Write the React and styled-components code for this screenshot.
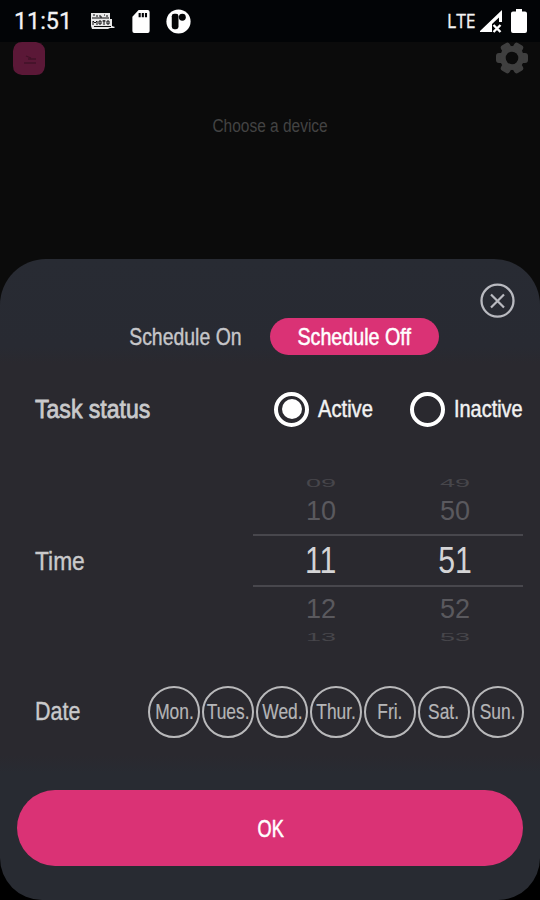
import React, { useState } from "react";
import styled, { createGlobalStyle } from "styled-components";

const GlobalStyle = createGlobalStyle`
  * {
    box-sizing: border-box;
  }
  body {
    margin: 0;
    background: #000;
    font-family: "Liberation Sans", Arial, sans-serif;
  }
  button {
    font-family: inherit;
    border: 0;
    padding: 0;
    background: none;
  }
`;

const Screen = styled.div`
  width: 540px;
  height: 900px;
  display: flex;
  flex-direction: column;
  overflow: hidden;
  background: linear-gradient(#0b0b0b 800px, #000 800px);
`;

const StatusBar = styled.div`
  height: 42px;
  display: flex;
  align-items: center;
  padding: 0 13px 0 14px;
  background: #020406;
  color: #f3f3f3;
`;

const Clock = styled.span`
  width: 76px;
  font-family: Roboto, sans-serif;
  font-size: 24px;
  line-height: 43px;
`;

const StatusIcons = styled.div`
  display: flex;
  align-items: center;
  gap: 16px;
  flex: 1;
`;

const Network = styled.span`
  width: 33px;
  font-family: "Open Sans", sans-serif;
  font-size: 19.5px;
  line-height: 42px;
`;

const AppBar = styled.div`
  height: 74px;
  display: flex;
  justify-content: space-between;
  padding: 0 12px 0 13px;
`;

const MenuButton = styled.button`
  width: 32px;
  height: 33px;
  display: flex;
`;

const Hint = styled.div`
  height: 20px;
  display: flex;
  justify-content: center;
  color: #434343;
  font-size: 18px;
  line-height: 20px;
`;

// squeezes the regular face to a condensed one
const Narrow = styled.span`
  display: block;
  flex: none;
  white-space: nowrap;
  transform: scaleX(${(props) => props.$scale || 0.82});
  transform-origin: ${(props) => props.$origin || "left"} center;
  -webkit-text-stroke: ${(props) => props.$stroke || 0}px currentColor;
`;

const Sheet = styled.div`
  height: 641px;
  margin-top: 123px;
  display: flex;
  flex-direction: column;
  border-radius: 46px 46px 42px 42px;
  background: linear-gradient(
    #282b33 0,
    #282a32 88px,
    #2a292f 104px,
    #2a292f 496px,
    #282b32 514px,
    #282b32 100%
  );
`;

const SheetHeader = styled.div`
  height: 59px;
  flex: none;
  display: flex;
  justify-content: flex-end;
  padding: 24px 25px 0 0;
`;

const CloseButton = styled.button`
  width: 35px;
  height: 35px;
  display: flex;
`;

const Tabs = styled.div`
  height: 38px;
  flex: none;
  display: flex;
  padding-left: 101px;
`;

const Tab = styled.button`
  width: 169px;
  height: 37px;
  display: flex;
  align-items: center;
  justify-content: center;
  border-radius: 19px;
  font-size: 24px;
  line-height: 26px;
  color: ${(props) => (props.$active ? "#fff" : "#c6c6c9")};
  background: ${(props) => (props.$active ? "#da3275" : "transparent")};
`;

const Row = styled.div`
  height: ${(props) => props.$height}px;
  flex: none;
  display: flex;
  align-items: center;
  padding-left: 35px;
`;

const RowLabel = styled.div`
  width: ${(props) => props.$width}px;
  flex: none;
  color: #c9c9cb;
  font-size: 26.5px;
`;

const Radio = styled.button`
  width: 136px;
  flex: none;
  display: flex;
  align-items: center;
  gap: 9px;
  color: #f2f2f2;
  font-size: 24px;
`;

const RadioMark = styled.span`
  width: 35px;
  height: 35px;
  flex: none;
  display: flex;
  align-items: center;
  justify-content: center;
  border: 4px solid #fff;
  border-radius: 50%;

  &::after {
    content: "";
    width: 20px;
    height: 20px;
    border-radius: 50%;
    background: ${(props) => (props.$checked ? "#fff" : "transparent")};
  }
`;

const Picker = styled.div`
  width: 270px;
  flex: none;
`;

const PickerRow = styled.div`
  height: ${(props) => props.$height}px;
  display: grid;
  grid-template-columns: 134px 134px;
  padding-left: 1px;
  align-items: center;
  justify-items: center;
  font-size: 27px;
  line-height: 30px;
  color: #5a595e;
`;

const CurrentRow = styled(PickerRow)`
  border-top: 2px solid #48474d;
  border-bottom: 2px solid #48474d;
  font-size: 36px;
  color: #d4d4d6;
`;

// the outermost rows are rolled over the edge of the wheel
const EdgeRow = styled(PickerRow)`
  line-height: ${(props) => props.$height}px;
  color: #47464b;

  span {
    transform: scaleY(0.42);
  }
`;

const Days = styled.div`
  display: flex;
  gap: 2px;
`;

const Day = styled.button`
  width: 52px;
  height: 52px;
  display: flex;
  align-items: center;
  justify-content: center;
  border: 2.5px solid #b9b9bb;
  border-radius: 50%;
  font-size: 22px;
  line-height: 24px;
  color: #b5b5b7;
`;

const OkButton = styled.button`
  height: 76px;
  flex: none;
  margin: 27px 17px 0;
  padding: 1px 0 0 2px;
  display: flex;
  align-items: center;
  justify-content: center;
  border-radius: 38px;
  background: #da3275;
  color: #fff;
  font-size: 24.5px;
`;

const MotoIcon = () => (
  <svg width="26" height="17" viewBox="0 0 26 17">
    <path d="M1 0h19v6h2v7l3 1-1 1h-4l-2 1H2l-1-3z" fill="#e8e8e8" />
    <path
      d="M3 2h2M7 2v2M10 2v2h2M14 2h1M17 2v2M2 5h17M3 12V8l2 2 2-2v4M9 8h2v3H9zM14 7v5M12.500 8h3M17 8h2v3h-2zM4 13.500h17"
      fill="none"
      stroke="#0a0b0c"
      strokeWidth="1"
    />
  </svg>
);

const SdCardIcon = () => (
  <svg width="18" height="23" viewBox="0 0 18 24">
    <path
      fillRule="evenodd"
      fill="#fff"
      d="M6.500 0H16a2 2 0 0 1 2 2v20a2 2 0 0 1-2 2H2a2 2 0 0 1-2-2V7zM6.500 3v4.500h2.200V3zM9.800 3v4.500h2.200V3zM13.100 3v4.500h2.200V3z"
    />
  </svg>
);

const PatreonIcon = () => (
  <svg width="25" height="25" viewBox="0 0 26 26">
    <circle cx="13" cy="13" r="12.600" fill="#fff" />
    <rect x="6" y="5" width="7" height="16" rx="2.500" fill="#050607" />
    <circle cx="17" cy="8.500" r="3.600" fill="#050607" />
  </svg>
);

const SignalIcon = () => (
  <svg width="23" height="23" viewBox="1 0 23 23">
    <path
      fillRule="evenodd"
      fill="#fff"
      d="M0 22L23 0v12h-3V7.500L13 14v8z"
    />
    <path d="M14.500 15l7 7M21.500 15l-7 7" stroke="#fff" strokeWidth="2.400" />
  </svg>
);

const BatteryIcon = () => (
  <svg width="24" height="24" viewBox="-8 0 24 24">
    <path
      fill="#fff"
      d="M5 0h6v2.500h3a2 2 0 0 1 2 2V22a2 2 0 0 1-2 2H2a2 2 0 0 1-2-2V4.500a2 2 0 0 1 2-2h3z"
    />
  </svg>
);

const MenuIcon = () => (
  <svg width="32" height="33" viewBox="0 0 32 33">
    <path d="M9 0h14q9 2 9 9v15q-1 9-9 9H9q-9-1-9-9V9q1-9 9-9z" fill="#5b1837" />
    <path d="M13 14l5 2M15 17h8M11 21h12" stroke="#421228" strokeWidth="1.300" />
  </svg>
);

const GearIcon = () => (
  <svg width="32" height="32" viewBox="0 0 32 32">
    <g fill="#3f3f3f">
      {[0, 60, 120].map((angle) => (
        <rect
          key={angle}
          x="0"
          y="11"
          width="32"
          height="10"
          rx="3"
          transform={`rotate(${angle} 16 16)`}
        />
      ))}
      <circle cx="16" cy="16" r="12" />
    </g>
    <circle cx="16" cy="16" r="6.300" fill="#0b0b0b" />
  </svg>
);

const CloseIcon = () => (
  <svg width="35" height="35" viewBox="0 0 35 35" fill="none" stroke="#b9bac0">
    <circle cx="17.500" cy="17.700" r="16" strokeWidth="2.300" />
    <path d="M11 11.500l13 13M24 11.500l-13 13" strokeWidth="2.200" />
  </svg>
);

const days = ["Mon.", "Tues.", "Wed.", "Thur.", "Fri.", "Sat.", "Sun."];

const App = () => {
  const [tab, setTab] = useState("off");
  const [active, setActive] = useState(true);

  return (
    <Screen>
      <GlobalStyle />
      <StatusBar>
        <Clock>
          <Narrow $scale={0.97} $stroke={0.3}>
            11:51
          </Narrow>
        </Clock>
        <StatusIcons>
          <MotoIcon />
          <SdCardIcon />
          <PatreonIcon />
        </StatusIcons>
        <Network>
          <Narrow $scale={0.9} $stroke={0.3}>
            LTE
          </Narrow>
        </Network>
        <SignalIcon />
        <BatteryIcon />
      </StatusBar>
      <AppBar>
        <MenuButton>
          <MenuIcon />
        </MenuButton>
        <MenuButton>
          <GearIcon />
        </MenuButton>
      </AppBar>
      <Hint>
        <Narrow $scale={0.86} $origin="center">
          Choose a device
        </Narrow>
      </Hint>
      <Sheet>
        <SheetHeader>
          <CloseButton>
            <CloseIcon />
          </CloseButton>
        </SheetHeader>
        <Tabs>
          <Tab $active={tab === "on"} onClick={() => setTab("on")}>
            <Narrow $scale={0.81} $origin="center" $stroke={0.4}>
              Schedule On
            </Narrow>
          </Tab>
          <Tab $active={tab === "off"} onClick={() => setTab("off")}>
            <Narrow $scale={0.82} $origin="center" $stroke={0.5}>
              Schedule Off
            </Narrow>
          </Tab>
        </Tabs>
        <Row $height={106}>
          <RowLabel $width={239}>
            <Narrow $scale={0.87} $stroke={0.8}>
              Task status
            </Narrow>
          </RowLabel>
          <Radio onClick={() => setActive(true)}>
            <RadioMark $checked={active} />
            <Narrow $scale={0.84} $stroke={0.5}>
              Active
            </Narrow>
          </Radio>
          <Radio onClick={() => setActive(false)}>
            <RadioMark $checked={!active} />
            <Narrow $scale={0.83} $stroke={0.5}>
              Inactive
            </Narrow>
          </Radio>
        </Row>
        <Row $height={198}>
          <RowLabel $width={218}>
            <Narrow $scale={0.86} $stroke={0.4}>
              Time
            </Narrow>
          </RowLabel>
          <Picker>
            <EdgeRow $height={10}>
              <span>09</span>
              <span>49</span>
            </EdgeRow>
            <PickerRow $height={46}>
              <span>10</span>
              <span>50</span>
            </PickerRow>
            <CurrentRow $height={53}>
              <Narrow $scale={0.84} $origin="center">
                11
              </Narrow>
              <Narrow $scale={0.84} $origin="center">
                51
              </Narrow>
            </CurrentRow>
            <PickerRow $height={44}>
              <span>12</span>
              <span>52</span>
            </PickerRow>
            <EdgeRow $height={13}>
              <span>13</span>
              <span>53</span>
            </EdgeRow>
          </Picker>
        </Row>
        <Row $height={103}>
          <RowLabel $width={113}>
            <Narrow $scale={0.81} $stroke={0.4}>
              Date
            </Narrow>
          </RowLabel>
          <Days>
            {days.map((day) => (
              <Day key={day}>
                <Narrow $scale={0.79} $origin="center" $stroke={0.2}>
                  {day}
                </Narrow>
              </Day>
            ))}
          </Days>
        </Row>
        <OkButton>
          <Narrow $scale={0.74} $origin="center" $stroke={0.6}>
            OK
          </Narrow>
        </OkButton>
      </Sheet>
    </Screen>
  );
};

export default App;
